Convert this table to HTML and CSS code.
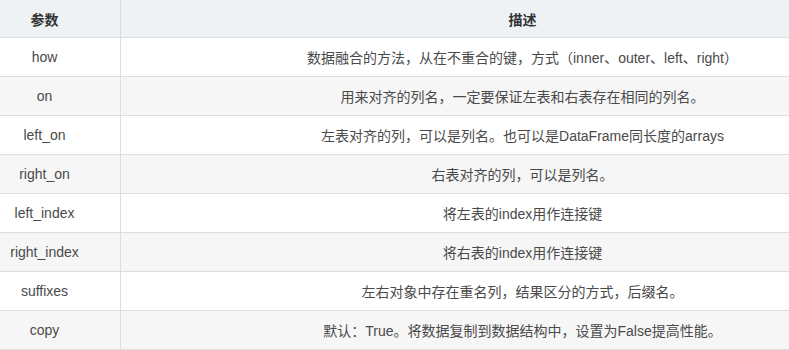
FILE: index.html
```html
<!DOCTYPE html>
<html>
<head>
<meta charset="utf-8">
<link rel="stylesheet" href="styles.css">
</head>
<body>
<div class="wrap">
<table class="params">
<thead>
<tr><th class="c1">参数</th><th class="c2">描述</th></tr>
</thead>
<tbody>
<tr><td>how</td><td>数据融合的方法，从在不重合的键，方式（inner、outer、left、right）</td></tr>
<tr><td>on</td><td>用来对齐的列名，一定要保证左表和右表存在相同的列名。</td></tr>
<tr><td>left_on</td><td>左表对齐的列，可以是列名。也可以是DataFrame同长度的arrays</td></tr>
<tr><td>right_on</td><td>右表对齐的列，可以是列名。</td></tr>
<tr><td>left_index</td><td>将左表的index用作连接键</td></tr>
<tr><td>right_index</td><td>将右表的index用作连接键</td></tr>
<tr><td>suffixes</td><td>左右对象中存在重名列，结果区分的方式，后缀名。</td></tr>
<tr><td>copy</td><td>默认：True。将数据复制到数据结构中，设置为False提高性能。</td></tr>
</tbody>
</table>
</div>
</body>
</html>
```
FILE: styles.css
```css
html, body {
  margin: 0;
  padding: 0;
  background: #fff;
  overflow: hidden;
}
.wrap {
  width: 789px;
  overflow: hidden;
}
.params {
  margin-left: -31px;
  width: 955px;
  border-collapse: collapse;
  font-family: "Liberation Sans", "Noto Sans CJK SC", sans-serif;
  font-size: 14px;
  color: #4a4a4a;
}
.params th, .params td {
  text-align: center;
  padding: 0;
  border-bottom: 1px solid #dddddd;
}
.params th:first-child, .params td:first-child {
  border-right: 1px solid #dddddd;
}
.params th {
  height: 37px;
  background: #eff2f5;
  font-weight: bold;
  color: #333;
}
.params td {
  height: 38px;
}
.params .c1 { width: 151px; }
.params tbody tr:nth-child(even) td {
  background: #f6f6f6;
}
```
